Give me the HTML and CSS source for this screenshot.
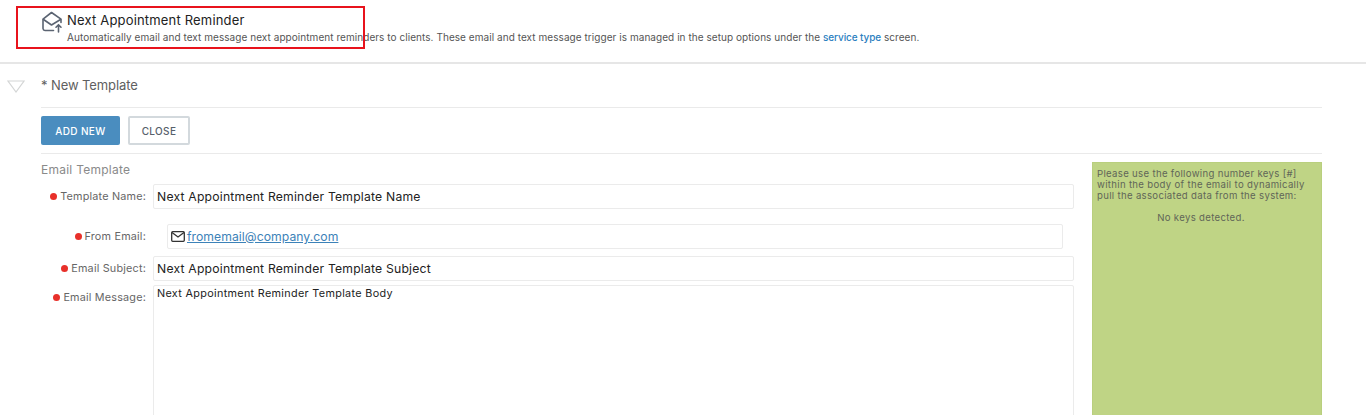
FILE: index.html
```html
<!DOCTYPE html>
<html lang="en">
<head>
<meta charset="utf-8">
<title>Next Appointment Reminder</title>
<link rel="stylesheet" href="styles.css">
</head>
<body>
<header class="page-head">
  <svg class="head-icon" width="22" height="22" viewBox="0 0 22 22" fill="none" stroke="#5b6472" stroke-width="1.6" stroke-linejoin="round" stroke-linecap="round">
    <path d="M12.5 19.5H4a2.2 2.2 0 0 1-2-2V8.2L10.5 1.5 20 8.2v3.3"/>
    <path d="M2.5 8.5 10.5 14l9-5.5"/>
    <path d="M17.5 21v-7M15 16.2l2.5-2.5 2.5 2.5"/>
  </svg>
  <div class="head-text">
    <h1 class="head-title">Next Appointment Reminder</h1>
    <p class="head-desc">Automatically email and text message next appointment reminders to clients. These email and text message trigger is managed in the setup options under the <a class="head-link" href="#">service type</a> screen.</p>
  </div>
  <div class="annotation"></div>
</header>

<main class="section">
  <div class="toggle">
    <svg width="18" height="13" viewBox="0 0 18 13" fill="none" stroke="#d4d6d6" stroke-width="1.2"><path d="M1 1h16L9 12z"/></svg>
  </div>
  <div class="content">
    <h2 class="section-title">* New Template</h2>
    <div class="actions">
      <button class="btn btn-primary" type="button">ADD NEW</button>
      <button class="btn btn-plain" type="button">CLOSE</button>
    </div>
    <div class="columns">
      <form class="form">
        <h3 class="form-title">Email Template</h3>
        <div class="row row-name">
          <label class="label"><span class="dot"></span>Template Name:</label>
          <div class="field">Next Appointment Reminder Template Name</div>
        </div>
        <div class="row row-from">
          <label class="label"><span class="dot"></span>From Email:</label>
          <div class="field field-from">
            <svg width="14" height="11" viewBox="0 0 14 11" fill="none" stroke="#333" stroke-width="1.3"><rect x=".7" y=".7" width="12.6" height="9.6" rx="1"/><path d="M1 1.5 7 6l6-4.5"/></svg>
            <a class="email-link" href="#">fromemail@company.com</a>
          </div>
        </div>
        <div class="row row-subject">
          <label class="label"><span class="dot"></span>Email Subject:</label>
          <div class="field">Next Appointment Reminder Template Subject</div>
        </div>
        <div class="row row-message">
          <label class="label label-top"><span class="dot"></span>Email Message:</label>
          <div class="field field-message">Next Appointment Reminder Template Body</div>
        </div>
      </form>
      <aside class="keys">
        <p class="keys-text">Please use the following number keys [#] within the body of the email to dynamically pull the associated data from the system:</p>
        <p class="keys-empty">No keys detected.</p>
      </aside>
    </div>
  </div>
</main>
</body>
</html>
```
FILE: styles.css
```css
* { box-sizing: border-box; }
html, body { margin: 0; height: 415px; overflow: hidden; background: #fff; }
body { font-family: Inter, "Open Sans", "Liberation Sans", sans-serif; color: #555; }

.page-head {
  position: relative;
  height: 64px;
  padding: 11px 0 0 41px;
  border-bottom: 2px solid #e6e6e6;
  display: flex;
  gap: 4px;
}
.head-icon { flex: none; }
.head-title { margin: 1px 0 0; font-size: 13px; line-height: 16px; font-weight: 400; color: #222; letter-spacing: .18px; }
.head-desc { margin: 2px 0 0; font-size: 10px; line-height: 14px; color: #555; letter-spacing: .055px; white-space: nowrap; }
.head-link { color: #2b80c0; text-decoration: none; font-weight: 500; letter-spacing: -.1px; }
.annotation {
  position: absolute;
  left: 16px; top: 6px;
  width: 349px; height: 43px;
  border: 2px solid #e8131c;
}

.section { display: flex; padding-right: 44px; }
.toggle { width: 41px; flex: none; padding: 13px 0 0 7px; }
.content { flex: 1; min-width: 0; }
.section-title {
  margin: 0;
  height: 44px;
  padding-top: 13px;
  font-size: 13px;
  line-height: 16px;
  font-weight: 400;
  color: #5f5f5f;
  letter-spacing: -.1px;
  border-bottom: 1px solid #eaeaea;
}
.actions { display: flex; gap: 8px; padding: 8px 0; height: 46px; border-bottom: 1px solid #eaeaea; }
.btn { width: 79px; height: 29px; border-radius: 2px; font-family: inherit; font-size: 10px; font-weight: 500; padding: 0; letter-spacing: .35px; }
.btn-primary { background: #4a8dbf; border: 0; color: #fff; }
.btn-plain { width: 62px; background: #fff; border: 2px solid #d3d9dd; color: #56606b; }

.columns { display: flex; gap: 18px; align-items: flex-start; padding-top: 8px; }
.form { width: 1033px; flex: none; }
.form-title { margin: 0; height: 22px; padding-top: 1px; font-size: 12px; line-height: 14px; font-weight: 400; color: #8a8a8a; letter-spacing: .25px; }
.row { display: flex; align-items: center; }
.label {
  width: 105px;
  flex: none;
  display: flex;
  align-items: center;
  justify-content: flex-end;
  gap: 3px;
  font-size: 10.8px;
  color: #666;
  letter-spacing: .2px;
}
.dot { width: 7px; height: 7px; border-radius: 50%; background: #e8302a; flex: none; }
.field {
  flex: 1;
  margin-left: 7px;
  height: 25px;
  padding: 0 3px;
  display: flex;
  align-items: center;
  border: 1px solid #ebebeb;
  border-radius: 2px;
  font-size: 12.2px;
  color: #222;
  letter-spacing: .2px;
}
.row-from { margin-top: 15px; }
.row-subject { margin-top: 7px; }
.row-message { margin-top: 4px; align-items: flex-start; }
.field-from { margin: 0 11px 0 21px; gap: 2px; }
.email-link { color: #3c82b8; font-size: 12.2px; letter-spacing: .05px; }
.field-message { height: 300px; align-items: flex-start; padding-top: 1px; font-size: 10.8px; letter-spacing: .33px; line-height: 14px; }
.label-top { margin-top: 6px; }

.keys {
  width: 230px;
  height: 300px;
  flex: none;
  background: #bfd485;
  border: 1px solid #b9cf7e;
  padding: 5px 16px 5px 4px;
  font-size: 9.6px;
  line-height: 11px;
  color: #5f6658;
  letter-spacing: .32px;
}
.keys-text { margin: 0; }
.keys-empty { margin: 11px 0 0; text-align: center; }
```
